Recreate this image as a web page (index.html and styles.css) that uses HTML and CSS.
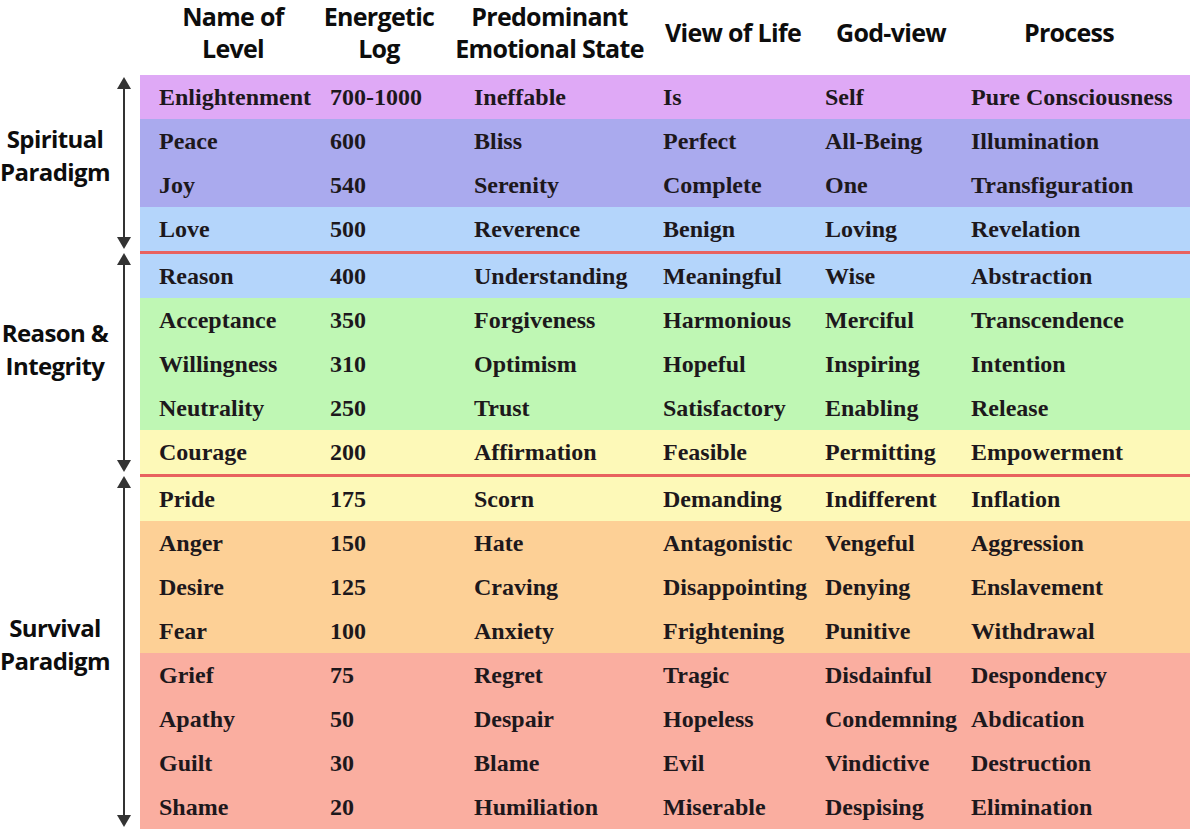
FILE: index.html
```html
<!DOCTYPE html>
<html lang="en">
<head>
<meta charset="utf-8">
<title>Map of Consciousness</title>
<link rel="stylesheet" href="styles.css">
</head>
<body>
<div class="page">
  <div class="head">
    <div class="hcell"><span>Name of<br>Level</span></div>
    <div class="hcell"><span>Energetic<br>Log</span></div>
    <div class="hcell"><span>Predominant<br>Emotional State</span></div>
    <div class="hcell"><span>View of Life</span></div>
    <div class="hcell"><span>God-view</span></div>
    <div class="hcell"><span>Process</span></div>
  </div>

  <div class="section">
    <div class="label">Spiritual<br>Paradigm</div>
    <div class="arrow"><i class="tip-up"></i><i class="shaft"></i><i class="tip-down"></i></div>
    <div class="rows">
      <div class="row pink"><span>Enlightenment</span><span>700-1000</span><span>Ineffable</span><span>Is</span><span>Self</span><span>Pure Consciousness</span></div>
      <div class="row violet"><span>Peace</span><span>600</span><span>Bliss</span><span>Perfect</span><span>All-Being</span><span>Illumination</span></div>
      <div class="row violet"><span>Joy</span><span>540</span><span>Serenity</span><span>Complete</span><span>One</span><span>Transfiguration</span></div>
      <div class="row blue"><span>Love</span><span>500</span><span>Reverence</span><span>Benign</span><span>Loving</span><span>Revelation</span></div>
    </div>
  </div>

  <div class="section">
    <div class="label label-high">Reason &amp;<br>Integrity</div>
    <div class="arrow"><i class="tip-up"></i><i class="shaft"></i><i class="tip-down"></i></div>
    <div class="rows divided">
      <div class="row blue"><span>Reason</span><span>400</span><span>Understanding</span><span>Meaningful</span><span>Wise</span><span>Abstraction</span></div>
      <div class="row green"><span>Acceptance</span><span>350</span><span>Forgiveness</span><span>Harmonious</span><span>Merciful</span><span>Transcendence</span></div>
      <div class="row green"><span>Willingness</span><span>310</span><span>Optimism</span><span>Hopeful</span><span>Inspiring</span><span>Intention</span></div>
      <div class="row green"><span>Neutrality</span><span>250</span><span>Trust</span><span>Satisfactory</span><span>Enabling</span><span>Release</span></div>
      <div class="row yellow"><span>Courage</span><span>200</span><span>Affirmation</span><span>Feasible</span><span>Permitting</span><span>Empowerment</span></div>
    </div>
  </div>

  <div class="section">
    <div class="label">Survival<br>Paradigm</div>
    <div class="arrow"><i class="tip-up"></i><i class="shaft"></i><i class="tip-down"></i></div>
    <div class="rows divided">
      <div class="row yellow"><span>Pride</span><span>175</span><span>Scorn</span><span>Demanding</span><span>Indifferent</span><span>Inflation</span></div>
      <div class="row orange"><span>Anger</span><span>150</span><span>Hate</span><span>Antagonistic</span><span>Vengeful</span><span>Aggression</span></div>
      <div class="row orange"><span>Desire</span><span>125</span><span>Craving</span><span>Disappointing</span><span>Denying</span><span>Enslavement</span></div>
      <div class="row orange"><span>Fear</span><span>100</span><span>Anxiety</span><span>Frightening</span><span>Punitive</span><span>Withdrawal</span></div>
      <div class="row salmon"><span>Grief</span><span>75</span><span>Regret</span><span>Tragic</span><span>Disdainful</span><span>Despondency</span></div>
      <div class="row salmon"><span>Apathy</span><span>50</span><span>Despair</span><span>Hopeless</span><span>Condemning</span><span>Abdication</span></div>
      <div class="row salmon"><span>Guilt</span><span>30</span><span>Blame</span><span>Evil</span><span>Vindictive</span><span>Destruction</span></div>
      <div class="row salmon"><span>Shame</span><span>20</span><span>Humiliation</span><span>Miserable</span><span>Despising</span><span>Elimination</span></div>
    </div>
  </div>
</div>
</body>
</html>
```

FILE: styles.css
```css
html, body {
  margin: 0;
  padding: 0;
  background: #ffffff;
}

.page {
  width: 1200px;
  height: 837px;
  overflow: hidden;
}

.head {
  height: 75px;
  display: grid;
  grid-template-columns: 186px 106px 235px 132px 184px 172px;
  padding-left: 140px;
  font-family: "Open Sans", "Liberation Sans", sans-serif;
  font-weight: 700;
  font-size: 25px;
  line-height: 32px;
  color: #0d0d0d;
  letter-spacing: -0.7px;
}

.hcell {
  display: flex;
  justify-content: center;
  align-items: flex-start;
  height: 64px;
  text-align: center;
  white-space: nowrap;
}

.hcell:nth-child(4),
.hcell:nth-child(5),
.hcell:nth-child(6) {
  align-items: center;
}

.section {
  display: grid;
  grid-template-columns: 110px 30px 1050px;
}

.label {
  display: flex;
  align-items: center;
  justify-content: center;
  text-align: center;
  font-family: "Open Sans", "Liberation Sans", sans-serif;
  font-weight: 700;
  font-size: 24px;
  line-height: 33px;
  color: #0d0d0d;
  letter-spacing: -0.6px;
  padding-bottom: 16px;
}

.label-high {
  padding-bottom: 28px;
}

.arrow {
  display: flex;
  flex-direction: column;
  align-items: center;
  padding: 2px 0 2px 0;
  margin-left: -2px;
}

.arrow i {
  display: block;
  flex: none;
}

.tip-up {
  width: 0;
  height: 0;
  border-left: 7px solid transparent;
  border-right: 7px solid transparent;
  border-bottom: 12px solid #333333;
}

.tip-down {
  width: 0;
  height: 0;
  border-left: 7px solid transparent;
  border-right: 7px solid transparent;
  border-top: 12px solid #333333;
}

.arrow .shaft {
  flex: 1;
  width: 2px;
  background: #333333;
}

.rows.divided {
  border-top: 3px solid #e8625f;
}

.row {
  display: grid;
  grid-template-columns: 171px 144px 189px 162px 146px 1fr;
  padding-left: 19px;
  height: 44px;
  line-height: 44px;
  font-family: "Liberation Serif", "Times New Roman", serif;
  font-weight: 700;
  font-size: 24px;
  color: #1d181c;
  white-space: nowrap;
}

.pink   { background: #dfa9f6; }
.violet { background: #aaaaee; }
.blue   { background: #b4d5fb; }
.green  { background: #bff7b4; }
.yellow { background: #fdf9b8; }
.orange { background: #fdd096; }
.salmon { background: #faaea0; }
```
